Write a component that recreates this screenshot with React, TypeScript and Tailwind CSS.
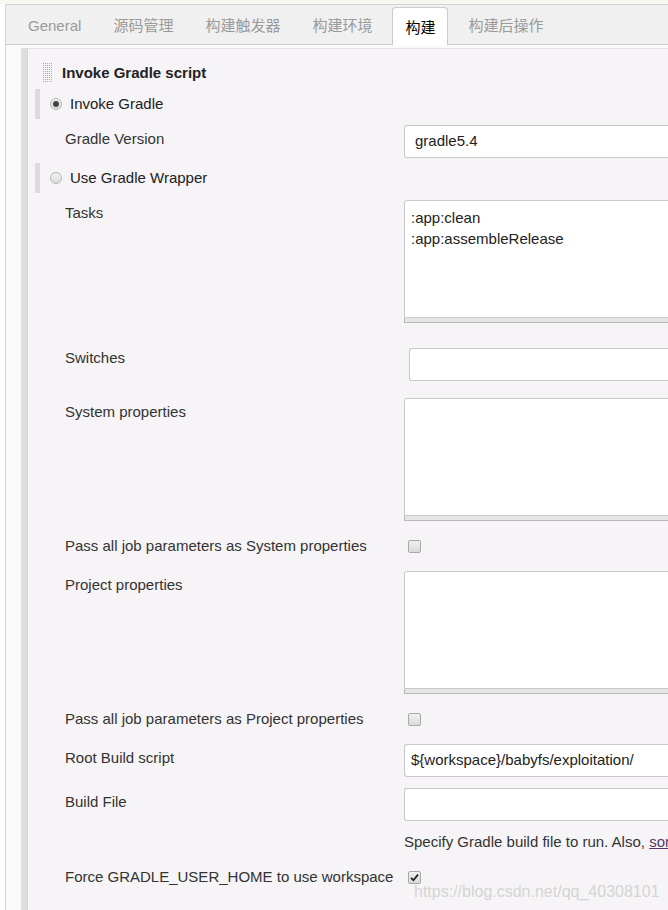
import React from "react";

const font = { fontFamily: '"Liberation Sans", Arial, "Noto Sans CJK SC", sans-serif' };

function Grip() {
  const dots = [];
  for (let r = 0; r < 10; r++) {
    for (let c = 0; c < 5; c++) {
      dots.push(<rect key={r + "-" + c} x={c * 2} y={r * 2} width="1" height="1" fill="#aaaaaa" />);
    }
  }
  return (
    <svg width="10" height="20" viewBox="0 0 10 20" className="shrink-0">
      {dots}
    </svg>
  );
}

function Radio({ checked }: { checked?: boolean }) {
  return (
    <span className="flex h-[12px] w-[12px] shrink-0 items-center justify-center rounded-full border border-[#b5b5b5] bg-gradient-to-b from-[#f2f2f2] to-[#dcdcdc]">
      {checked && <span className="h-[6px] w-[6px] rounded-full bg-[#444]" />}
    </span>
  );
}

function Checkbox({ checked }: { checked?: boolean }) {
  return (
    <span className="ml-1 flex h-[13px] w-[13px] shrink-0 items-center justify-center rounded-[2px] border border-[#a8a8a8] bg-gradient-to-b from-[#f0f0f0] to-[#dadada]">
      {checked && (
        <svg width="9" height="9" viewBox="0 0 9 9">
          <path d="M1 4.8 L3.4 7.2 L8 1.6" stroke="#222" strokeWidth="1.8" fill="none" />
        </svg>
      )}
    </span>
  );
}

function Label({ children, pt }: { children: React.ReactNode; pt: string }) {
  return <div className={"w-[376px] shrink-0 pl-[37px] leading-5 " + pt}>{children}</div>;
}

function TextArea({ lines }: { lines?: string[] }) {
  return (
    <div className="w-[300px] shrink-0">
      <div className="h-[118px] rounded-tl-[3px] border border-[#c8c8c8] bg-white px-[6px] pt-[6px] text-[15px] leading-[21px] text-[#222]">
        {lines?.map((l) => (
          <div key={l}>{l}</div>
        ))}
      </div>
      <div className="h-[5px] border border-t-0 border-[#b8b8b8] bg-[#e6e6e6]" />
    </div>
  );
}

function Input({ value, pl = "pl-[6px]", ml = "" }: { value?: string; pl?: string; ml?: string }) {
  return (
    <div
      className={
        "flex h-[33px] w-[300px] shrink-0 items-center rounded-l-[3px] border border-r-0 border-[#c8c8c8] bg-white text-[15px] text-[#222] " +
        pl +
        " " +
        ml
      }
    >
      {value}
    </div>
  );
}

const tabs = ["General", "源码管理", "构建触发器", "构建环境", "构建", "构建后操作"];

export default function App() {
  return (
    <div className="relative h-[910px] w-[668px] overflow-hidden bg-[#fdfdfd] text-[15px] text-[#333]" style={font}>
      <div className="h-[4px] bg-[#f5f8ee]" />
      <div className="ml-[5px] h-[906px] border-l border-t border-[#d3d3d3] bg-[#fbfafb]">
        {/* tabs */}
        <div className="flex h-[40px] items-end gap-2 border-b border-[#cbcbcb] bg-[#f0f0f0] pl-[10px]">
          {tabs.map((t) => (
            <div
              key={t}
              className={
                t === "构建"
                  ? "-mb-px flex h-[38px] items-center rounded-t-[4px] border border-b-0 border-[#cbcbcb] bg-white px-3 pt-[3px] text-black"
                  : "flex h-[38px] items-center px-3 pt-[3px] text-[#9a9a9a]"
              }
            >
              {t}
            </div>
          ))}
        </div>

        {/* body */}
        <div className="mt-[3px] ml-[15px] flex h-[870px]">
          <div className="w-[6px] shrink-0 bg-[#e0dde0]" />
          <div className="w-px shrink-0 bg-[#d6d3d6]" />
          <div className="min-w-0 flex-1 border-t border-[#e4e1e4] bg-[#f6f4f6]">
            {/* heading */}
            <div className="mt-3 flex h-6 items-center gap-[9px] pl-[15px] font-bold text-[#222]">
              <Grip />
              Invoke Gradle script
            </div>

            <div className="mt-1 flex h-[30px] items-center">
              <div className="ml-[7px] h-full w-[5px] bg-[#dddadd]" />
              <div className="ml-[10px]">
                <Radio checked />
              </div>
              <span className="ml-[8px] text-[#222]">Invoke Gradle</span>
            </div>

            <div className="mt-[6px] flex">
              <Label pt="pt-[4px]">Gradle Version</Label>
              <Input value="gradle5.4" pl="pl-[10px]" />
            </div>

            <div className="mt-[5px] flex h-[30px] items-center">
              <div className="ml-[7px] h-full w-[5px] bg-[#dddadd]" />
              <div className="ml-[10px]">
                <Radio />
              </div>
              <span className="ml-[8px] text-[#222]">Use Gradle Wrapper</span>
            </div>

            <div className="mt-[7px] flex">
              <Label pt="pt-[3px]">Tasks</Label>
              <TextArea lines={[":app:clean", ":app:assembleRelease"]} />
            </div>

            <div className="mt-[25px] flex">
              <Label pt="pt-0">Switches</Label>
              <Input ml="ml-[5px]" />
            </div>

            <div className="mt-[17px] flex">
              <Label pt="pt-[4px]">System properties</Label>
              <TextArea />
            </div>

            <div className="mt-[15px] flex h-5 items-center">
              <Label pt="pt-0">Pass all job parameters as System properties</Label>
              <Checkbox />
            </div>

            <div className="mt-[15px] flex">
              <Label pt="pt-[4px]">Project properties</Label>
              <TextArea />
            </div>

            <div className="mt-[15px] flex h-5 items-center">
              <Label pt="pt-0">Pass all job parameters as Project properties</Label>
              <Checkbox />
            </div>

            <div className="mt-[15px] flex">
              <Label pt="pt-[4px]">Root Build script</Label>
              <Input value="${workspace}/babyfs/exploitation/" />
            </div>

            <div className="mt-[11px] flex">
              <Label pt="pt-[4px]">Build File</Label>
              <Input />
            </div>

            <div className="mt-[11px] flex h-5 items-center">
              <div className="w-[376px] shrink-0" />
              <div className="whitespace-nowrap text-[#333]">
                Specify Gradle build file to run. Also,{" "}
                <span className="text-[#5c3566] underline">some environment variables are available</span>
              </div>
            </div>

            <div className="mt-[15px] flex h-5 items-center">
              <Label pt="pt-0">Force GRADLE_USER_HOME to use workspace</Label>
              <Checkbox checked />
            </div>
          </div>
        </div>
      </div>

      {/* watermark */}
      <div className="absolute left-[414px] top-[880px] whitespace-nowrap text-[16px] text-[#d4d4d4]">
        https://blog.csdn.net/qq_40308101
      </div>
    </div>
  );
}
